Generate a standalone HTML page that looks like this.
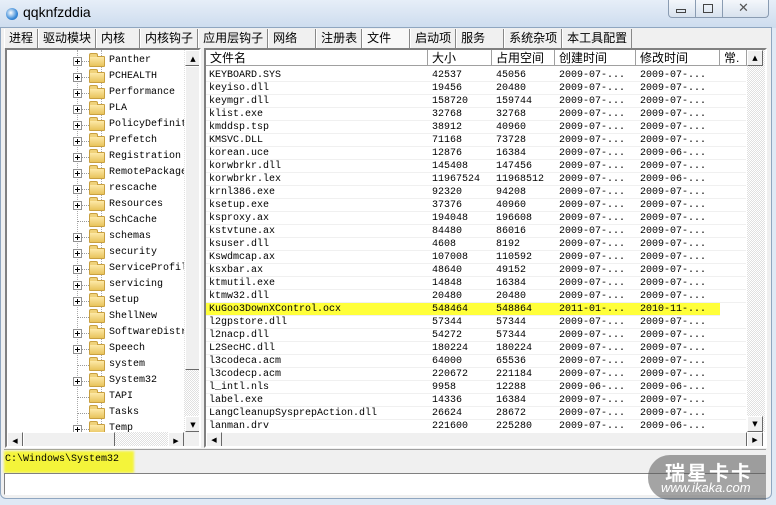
<!DOCTYPE html>
<html><head><meta charset="utf-8"><style>
*{margin:0;padding:0;box-sizing:border-box}
body{width:776px;height:505px;overflow:hidden;background:#dfe9f5;font-family:"Liberation Mono","Noto Sans CJK SC",monospace;font-size:10px;position:relative}
.title{position:absolute;left:0;top:0;width:776px;height:28px;background:linear-gradient(#e6eef8,#cddcee)}
.frame{position:absolute;left:0;top:27px;width:772px;height:472px;background:#f0f0f0;border:1px solid #8fa6c0;border-radius:0 0 6px 6px}
.abs{position:absolute}
.tabs{position:absolute;left:4px;top:29px;height:19px;display:flex;font-family:"Liberation Sans","Noto Sans CJK SC",sans-serif;font-size:12px}
.tabs span{border-right:1px solid #888;border-left:1px solid #fff;padding:0 4px;line-height:19px;white-space:nowrap}
.panel{position:absolute;background:#fff;border:2px solid;border-color:#808080 #fff #fff #808080;overflow:hidden}
.tree div{position:absolute;left:0;height:16px;line-height:16px;white-space:nowrap}
.plus{position:absolute;left:66px;top:4px;width:9px;height:9px;border:1px solid #919191;background:#fff}
.plus:before{content:"";position:absolute;left:1px;top:3px;width:5px;height:1px;background:#000}
.plus:after{content:"";position:absolute;left:3px;top:1px;width:1px;height:5px;background:#000}
.dot{position:absolute;left:75px;top:8px;width:7px;border-top:1px dotted #999}
.fold{position:absolute;left:82px;top:3px;width:16px;height:11px;background:linear-gradient(#fde9a8,#e8c45c);border:1px solid #c9a040;border-radius:1px}
.fold:before{content:"";position:absolute;left:-1px;top:-4px;width:7px;height:3px;background:#f0d27a;border:1px solid #c9a040;border-bottom:none;border-radius:2px 2px 0 0}
.tree .t{position:absolute;left:102px;top:0}
.sb{position:absolute;background:#eaeaea}
.btn{position:absolute;background:#f0f0f0;border:1px solid;border-color:#fff #696969 #696969 #fff;width:16px;height:16px;font-size:7px;text-align:center;line-height:14px;color:#000;font-family:"DejaVu Sans",sans-serif}
.hdr{position:absolute;top:0;height:16px;font-family:"Liberation Sans","Noto Sans CJK SC",sans-serif;font-size:12px;line-height:16px;background:#fff;border-right:1px solid #a0a0a0;border-bottom:1px solid #a0a0a0;padding-left:4px;white-space:nowrap;overflow:hidden}
.row{position:absolute;left:0;width:540px;height:13px;line-height:13px;border-bottom:1px solid #f0f0f0;white-space:nowrap}
.row span{position:absolute;top:0}
</style></head><body>
<div class="title">
 <div class="abs" style="left:6px;top:8px;width:12px;height:12px;border-radius:50%;background:radial-gradient(circle at 40% 40%,#fff,#3a8ad8 60%,#1a5aa8)"></div>
 <div class="abs" style="left:23px;top:4px;font-family:'Liberation Sans',sans-serif;font-size:14px">qqknfzddia</div>
 <div class="abs" style="left:668px;top:0;width:101px;height:18px;border:1px solid #8a9cb2;border-top:none;border-radius:0 0 4px 4px;background:linear-gradient(#f4f7fb,#d8e2ee)"></div>
 <div class="abs" style="left:695px;top:0;width:1px;height:18px;background:#8a9cb2"></div>
 <div class="abs" style="left:722px;top:0;width:1px;height:18px;background:#8a9cb2"></div>
 <div class="abs" style="left:676px;top:9px;width:10px;height:4px;border:1px solid #444"></div>
 <div class="abs" style="left:703px;top:4px;width:10px;height:9px;border:1px solid #444"></div>
 <div class="abs" style="left:738px;top:1px;font-size:13px;color:#555;font-family:'DejaVu Sans',sans-serif">✕</div>
</div>
<div class="frame"></div>
<div class="tabs"><span>进程</span><span>驱动模块</span><span style="padding-right:14px">内核</span><span>内核钩子</span><span>应用层钩子</span><span style="padding-right:18px">网络</span><span>注册表</span><span style="background:#f8f8f8;padding-right:18px">文件</span><span>启动项</span><span style="padding-right:18px">服务</span><span>系统杂项</span><span>本工具配置</span></div>

<div class="panel tree" style="left:5px;top:48px;width:196px;height:400px">
 <div class="abs" style="left:94px;top:0;height:400px;border-left:1px dotted #aaa"></div>
 <div class="abs" style="left:70px;top:0;height:380px;border-left:1px dotted #aaa"></div>
 <div style="top:3px;width:180px"><i class="plus"></i><i class="dot"></i><i class="fold"></i><span class="t">Panther</span></div>
 <div style="top:19px"><i class="plus"></i><i class="dot"></i><i class="fold"></i><span class="t">PCHEALTH</span></div>
 <div style="top:35px"><i class="plus"></i><i class="dot"></i><i class="fold"></i><span class="t">Performance</span></div>
 <div style="top:51px"><i class="plus"></i><i class="dot"></i><i class="fold"></i><span class="t">PLA</span></div>
 <div style="top:67px"><i class="plus"></i><i class="dot"></i><i class="fold"></i><span class="t">PolicyDefinit</span></div>
 <div style="top:83px"><i class="plus"></i><i class="dot"></i><i class="fold"></i><span class="t">Prefetch</span></div>
 <div style="top:99px"><i class="plus"></i><i class="dot"></i><i class="fold"></i><span class="t">Registration</span></div>
 <div style="top:115px"><i class="plus"></i><i class="dot"></i><i class="fold"></i><span class="t">RemotePackages</span></div>
 <div style="top:131px"><i class="plus"></i><i class="dot"></i><i class="fold"></i><span class="t">rescache</span></div>
 <div style="top:147px"><i class="plus"></i><i class="dot"></i><i class="fold"></i><span class="t">Resources</span></div>
 <div style="top:163px"><i class="dot" style="left:70px;width:12px"></i><i class="fold"></i><span class="t">SchCache</span></div>
 <div style="top:179px"><i class="plus"></i><i class="dot"></i><i class="fold"></i><span class="t">schemas</span></div>
 <div style="top:195px"><i class="plus"></i><i class="dot"></i><i class="fold"></i><span class="t">security</span></div>
 <div style="top:211px"><i class="plus"></i><i class="dot"></i><i class="fold"></i><span class="t">ServiceProfile</span></div>
 <div style="top:227px"><i class="plus"></i><i class="dot"></i><i class="fold"></i><span class="t">servicing</span></div>
 <div style="top:243px"><i class="plus"></i><i class="dot"></i><i class="fold"></i><span class="t">Setup</span></div>
 <div style="top:259px"><i class="dot" style="left:70px;width:12px"></i><i class="fold"></i><span class="t">ShellNew</span></div>
 <div style="top:275px"><i class="plus"></i><i class="dot"></i><i class="fold"></i><span class="t">SoftwareDistr</span></div>
 <div style="top:291px"><i class="plus"></i><i class="dot"></i><i class="fold"></i><span class="t">Speech</span></div>
 <div style="top:307px"><i class="dot" style="left:70px;width:12px"></i><i class="fold"></i><span class="t">system</span></div>
 <div style="top:323px"><i class="plus"></i><i class="dot"></i><i class="fold"></i><span class="t">System32</span></div>
 <div style="top:339px"><i class="dot" style="left:70px;width:12px"></i><i class="fold"></i><span class="t">TAPI</span></div>
 <div style="top:355px"><i class="dot" style="left:70px;width:12px"></i><i class="fold"></i><span class="t">Tasks</span></div>
 <div style="top:371px"><i class="plus"></i><i class="dot"></i><i class="fold"></i><span class="t">Temp</span></div>
 <div class="sb" style="left:177px;top:0;width:17px;height:382px;background:repeating-conic-gradient(#fff 0 25%,#e0e0e0 0 50%) 0 0/2px 2px"></div>
 <div class="btn" style="left:178px;top:0">▲</div>
 <div class="abs" style="left:178px;top:16px;width:16px;height:304px;background:#f0f0f0;border:1px solid;border-color:#fff #696969 #696969 #fff"></div>
 <div class="btn" style="left:178px;top:366px">▼</div>
 <div class="sb" style="left:0;top:382px;width:194px;height:16px;background:repeating-conic-gradient(#fff 0 25%,#e0e0e0 0 50%) 0 0/2px 2px"></div>
 <div class="btn" style="left:0;top:382px">◀</div>
 <div class="abs" style="left:16px;top:382px;width:92px;height:16px;background:#f0f0f0;border:1px solid;border-color:#fff #696969 #696969 #fff"></div>
 <div class="btn" style="left:161px;top:382px">▶</div>
 <div class="abs" style="left:177px;top:382px;width:17px;height:16px;background:#f0f0f0"></div>
</div>

<div class="panel" style="left:204px;top:48px;width:563px;height:400px">
 <div class="hdr" style="left:0;width:222px">文件名</div>
 <div class="hdr" style="left:222px;width:64px">大小</div>
 <div class="hdr" style="left:286px;width:63px">占用空间</div>
 <div class="hdr" style="left:349px;width:81px">创建时间</div>
 <div class="hdr" style="left:430px;width:84px">修改时间</div>
 <div class="hdr" style="left:514px;width:27px">常.</div>
 <div class="abs" style="left:0;top:19px;width:541px;height:363px;overflow:hidden">
<div class="row" style="top:0px"><span style="left:3px">KEYBOARD.SYS</span><span style="left:226px">42537</span><span style="left:290px">45056</span><span style="left:353px">2009-07-...</span><span style="left:434px">2009-07-...</span></div>
<div class="row" style="top:13px"><span style="left:3px">keyiso.dll</span><span style="left:226px">19456</span><span style="left:290px">20480</span><span style="left:353px">2009-07-...</span><span style="left:434px">2009-07-...</span></div>
<div class="row" style="top:26px"><span style="left:3px">keymgr.dll</span><span style="left:226px">158720</span><span style="left:290px">159744</span><span style="left:353px">2009-07-...</span><span style="left:434px">2009-07-...</span></div>
<div class="row" style="top:39px"><span style="left:3px">klist.exe</span><span style="left:226px">32768</span><span style="left:290px">32768</span><span style="left:353px">2009-07-...</span><span style="left:434px">2009-07-...</span></div>
<div class="row" style="top:52px"><span style="left:3px">kmddsp.tsp</span><span style="left:226px">38912</span><span style="left:290px">40960</span><span style="left:353px">2009-07-...</span><span style="left:434px">2009-07-...</span></div>
<div class="row" style="top:65px"><span style="left:3px">KMSVC.DLL</span><span style="left:226px">71168</span><span style="left:290px">73728</span><span style="left:353px">2009-07-...</span><span style="left:434px">2009-07-...</span></div>
<div class="row" style="top:78px"><span style="left:3px">korean.uce</span><span style="left:226px">12876</span><span style="left:290px">16384</span><span style="left:353px">2009-07-...</span><span style="left:434px">2009-06-...</span></div>
<div class="row" style="top:91px"><span style="left:3px">korwbrkr.dll</span><span style="left:226px">145408</span><span style="left:290px">147456</span><span style="left:353px">2009-07-...</span><span style="left:434px">2009-07-...</span></div>
<div class="row" style="top:104px"><span style="left:3px">korwbrkr.lex</span><span style="left:226px">11967524</span><span style="left:290px">11968512</span><span style="left:353px">2009-07-...</span><span style="left:434px">2009-06-...</span></div>
<div class="row" style="top:117px"><span style="left:3px">krnl386.exe</span><span style="left:226px">92320</span><span style="left:290px">94208</span><span style="left:353px">2009-07-...</span><span style="left:434px">2009-07-...</span></div>
<div class="row" style="top:130px"><span style="left:3px">ksetup.exe</span><span style="left:226px">37376</span><span style="left:290px">40960</span><span style="left:353px">2009-07-...</span><span style="left:434px">2009-07-...</span></div>
<div class="row" style="top:143px"><span style="left:3px">ksproxy.ax</span><span style="left:226px">194048</span><span style="left:290px">196608</span><span style="left:353px">2009-07-...</span><span style="left:434px">2009-07-...</span></div>
<div class="row" style="top:156px"><span style="left:3px">kstvtune.ax</span><span style="left:226px">84480</span><span style="left:290px">86016</span><span style="left:353px">2009-07-...</span><span style="left:434px">2009-07-...</span></div>
<div class="row" style="top:169px"><span style="left:3px">ksuser.dll</span><span style="left:226px">4608</span><span style="left:290px">8192</span><span style="left:353px">2009-07-...</span><span style="left:434px">2009-07-...</span></div>
<div class="row" style="top:182px"><span style="left:3px">Kswdmcap.ax</span><span style="left:226px">107008</span><span style="left:290px">110592</span><span style="left:353px">2009-07-...</span><span style="left:434px">2009-07-...</span></div>
<div class="row" style="top:195px"><span style="left:3px">ksxbar.ax</span><span style="left:226px">48640</span><span style="left:290px">49152</span><span style="left:353px">2009-07-...</span><span style="left:434px">2009-07-...</span></div>
<div class="row" style="top:208px"><span style="left:3px">ktmutil.exe</span><span style="left:226px">14848</span><span style="left:290px">16384</span><span style="left:353px">2009-07-...</span><span style="left:434px">2009-07-...</span></div>
<div class="row" style="top:221px"><span style="left:3px">ktmw32.dll</span><span style="left:226px">20480</span><span style="left:290px">20480</span><span style="left:353px">2009-07-...</span><span style="left:434px">2009-07-...</span></div>
<div class="row" style="top:234px;background:#ffff3a;width:514px"><span style="left:3px">KuGoo3DownXControl.ocx</span><span style="left:226px">548464</span><span style="left:290px">548864</span><span style="left:353px">2011-01-...</span><span style="left:434px">2010-11-...</span></div>
<div class="row" style="top:247px"><span style="left:3px">l2gpstore.dll</span><span style="left:226px">57344</span><span style="left:290px">57344</span><span style="left:353px">2009-07-...</span><span style="left:434px">2009-07-...</span></div>
<div class="row" style="top:260px"><span style="left:3px">l2nacp.dll</span><span style="left:226px">54272</span><span style="left:290px">57344</span><span style="left:353px">2009-07-...</span><span style="left:434px">2009-07-...</span></div>
<div class="row" style="top:273px"><span style="left:3px">L2SecHC.dll</span><span style="left:226px">180224</span><span style="left:290px">180224</span><span style="left:353px">2009-07-...</span><span style="left:434px">2009-07-...</span></div>
<div class="row" style="top:286px"><span style="left:3px">l3codeca.acm</span><span style="left:226px">64000</span><span style="left:290px">65536</span><span style="left:353px">2009-07-...</span><span style="left:434px">2009-07-...</span></div>
<div class="row" style="top:299px"><span style="left:3px">l3codecp.acm</span><span style="left:226px">220672</span><span style="left:290px">221184</span><span style="left:353px">2009-07-...</span><span style="left:434px">2009-07-...</span></div>
<div class="row" style="top:312px"><span style="left:3px">l_intl.nls</span><span style="left:226px">9958</span><span style="left:290px">12288</span><span style="left:353px">2009-06-...</span><span style="left:434px">2009-06-...</span></div>
<div class="row" style="top:325px"><span style="left:3px">label.exe</span><span style="left:226px">14336</span><span style="left:290px">16384</span><span style="left:353px">2009-07-...</span><span style="left:434px">2009-07-...</span></div>
<div class="row" style="top:338px"><span style="left:3px">LangCleanupSysprepAction.dll</span><span style="left:226px">26624</span><span style="left:290px">28672</span><span style="left:353px">2009-07-...</span><span style="left:434px">2009-07-...</span></div>
<div class="row" style="top:351px"><span style="left:3px">lanman.drv</span><span style="left:226px">221600</span><span style="left:290px">225280</span><span style="left:353px">2009-07-...</span><span style="left:434px">2009-06-...</span></div>
 </div>
 <div class="sb" style="left:541px;top:0;width:18px;height:382px;background:repeating-conic-gradient(#fff 0 25%,#e0e0e0 0 50%) 0 0/2px 2px"></div>
 <div class="btn" style="left:541px;top:0">▲</div>
 <div class="btn" style="left:541px;top:366px">▼</div>
 <div class="abs" style="left:0;top:382px;width:541px;height:16px;background:#f0f0f0;border:1px solid;border-color:#fff #696969 #696969 #fff"></div>
 <div class="btn" style="left:0;top:382px">◀</div>
 <div class="btn" style="left:541px;top:382px">▶</div>
</div>

<div class="abs" style="left:4px;top:449px;width:762px;height:1px;background:#a0a0a0"></div>
<div class="abs" style="left:4px;top:451px;width:130px;height:22px;background:#f4f43a;filter:blur(1px)"></div>
<div class="abs" style="left:5px;top:454px;font-size:10px">C:\Windows\System32</div>
<div class="abs" style="left:4px;top:473px;width:762px;height:22px;background:#fff;border:1px solid;border-color:#808080 #fff #fff #808080"></div>
<div class="abs" style="left:648px;top:455px;width:118px;height:45px;background:rgba(90,90,90,.55);border-radius:22px 0 0 22px"></div>
<div class="abs" style="left:665px;top:457px;color:#fff;font-family:'Noto Sans CJK SC',sans-serif;font-size:20px;font-weight:bold;letter-spacing:2px">瑞星卡卡</div>
<div class="abs" style="left:661px;top:480px;color:#fff;font-family:'Liberation Sans',sans-serif;font-style:italic;font-size:13px">www.ikaka.com</div>
</body></html>
